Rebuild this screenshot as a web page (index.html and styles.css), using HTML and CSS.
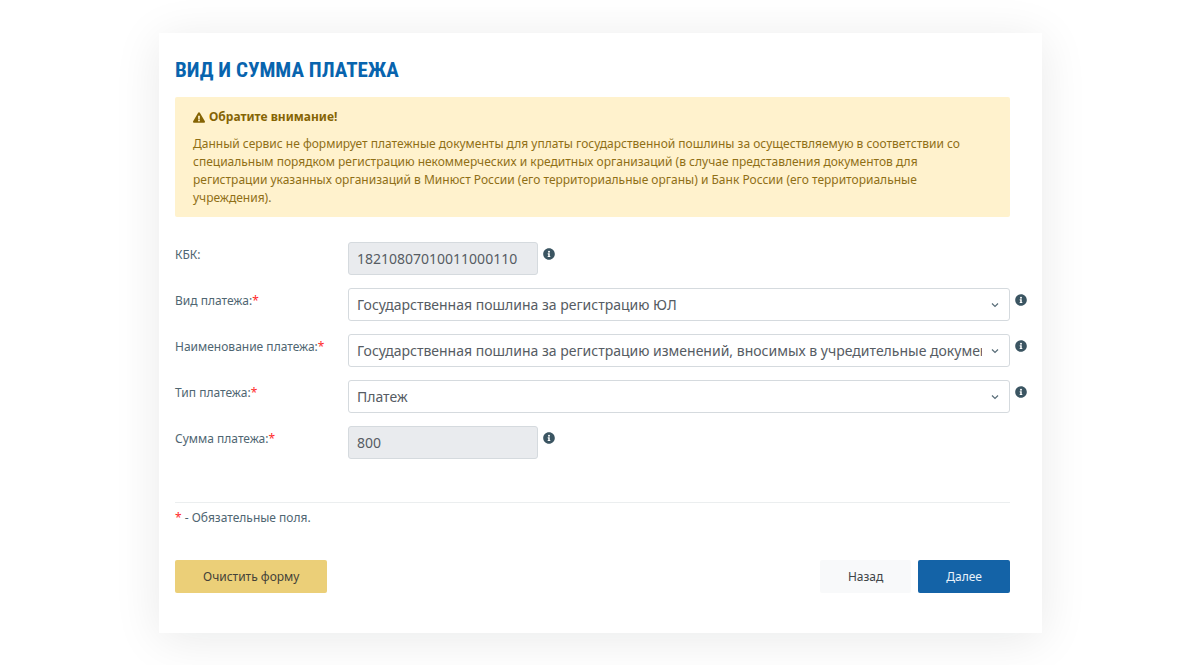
FILE: index.html
```html
<!DOCTYPE html>
<html lang="ru">
<head>
<meta charset="utf-8">
<title>Вид и сумма платежа</title>
<link rel="stylesheet" href="styles.css">
</head>
<body>
<svg class="sprite" aria-hidden="true">
  <symbol id="info" viewBox="0 0 512 512"><path fill="currentColor" d="M256 8C119 8 8 119 8 256s111 248 248 248 248-111 248-248S393 8 256 8zm0 110a42 42 0 1 1 0 84 42 42 0 0 1 0-84zm56 254c0 7-5 12-12 12h-88c-7 0-12-5-12-12v-24c0-7 5-12 12-12h12v-64h-12c-7 0-12-5-12-12v-24c0-7 5-12 12-12h64c7 0 12 5 12 12v100h12c7 0 12 5 12 12v24z"/></symbol>
</svg>
<main class="card">
  <h1 class="title">Вид и сумма платежа</h1>
  <section class="alert">
    <h2 class="alert-title">
      <svg class="alert-icon" viewBox="0 0 576 512" aria-hidden="true"><path fill="currentColor" d="M569.500 440C588 472 565 512 528 512H48c-37 0-60-40-41.500-72L246.400 24c18.500-32 64.700-32 83.200 0l239.900 416zM288 354a46 46 0 1 0 0 92 46 46 0 0 0 0-92zm-43.700-165.300 7.400 136c.400 6.400 5.600 11.300 12 11.300h48.500c6.400 0 11.700-4.900 12-11.300l7.400-136c.400-6.900-5.100-12.700-12-12.700h-63.400c-6.800 0-12.300 5.800-11.900 12.700z"/></svg>
      Обратите внимание!
    </h2>
    <p class="alert-text">Данный сервис не формирует платежные документы для уплаты государственной пошлины за осуществляемую в соответствии со специальным порядком регистрацию некоммерческих и кредитных организаций (в случае представления документов для регистрации указанных организаций в Минюст России (его территориальные органы) и Банк России (его территориальные учреждения).</p>
  </section>
  <form class="form">
    <div class="fields">
      <div class="row">
        <label class="label" for="kbk">КБК:</label>
        <div class="control">
          <input class="field field-short" id="kbk" type="text" value="18210807010011000110" readonly>
          <svg class="info"><use href="#info"/></svg>
        </div>
      </div>
      <div class="row">
        <label class="label" for="kind">Вид платежа:<span class="required">*</span></label>
        <div class="control">
          <select class="field select" id="kind"><option>Государственная пошлина за регистрацию ЮЛ</option></select>
          <svg class="info"><use href="#info"/></svg>
        </div>
      </div>
      <div class="row">
        <label class="label" for="name">Наименование платежа:<span class="required">*</span></label>
        <div class="control">
          <select class="field select" id="name"><option>Государственная пошлина за регистрацию изменений, вносимых в учредительные документы</option></select>
          <svg class="info"><use href="#info"/></svg>
        </div>
      </div>
      <div class="row">
        <label class="label" for="type">Тип платежа:<span class="required">*</span></label>
        <div class="control">
          <select class="field select" id="type"><option>Платеж</option></select>
          <svg class="info"><use href="#info"/></svg>
        </div>
      </div>
      <div class="row">
        <label class="label" for="sum">Сумма платежа:<span class="required">*</span></label>
        <div class="control">
          <input class="field field-short" id="sum" type="text" value="800" readonly>
          <svg class="info"><use href="#info"/></svg>
        </div>
      </div>
    </div>
    <p class="note"><span class="required">*</span> - Обязательные поля.</p>
    <div class="actions">
      <button class="button button-clear" type="button">Очистить форму</button>
      <button class="button button-back" type="button">Назад</button>
      <button class="button button-next" type="button">Далее</button>
    </div>
  </form>
</main>
</body>
</html>
```
FILE: styles.css
```css
* {
  box-sizing: border-box;
}

body {
  margin: 0;
  padding: 33px 158px 32px 159px;
  background: #fff;
  color: #4f6672;
  font: 12px/18px "Noto Sans", sans-serif;
}

.sprite {
  display: none;
}

.card {
  padding: 24px 32px 40px 16px;
  background: #fff;
  box-shadow: 0 6px 45px rgba(0, 20, 20, 0.09);
}

.title {
  margin: 0 0 14px;
  color: #0864ae;
  font: 700 21px/26px "Roboto Condensed", "Liberation Sans Narrow", Roboto, sans-serif;
  text-transform: uppercase;
}

.alert {
  padding: 11px 18px 10px;
  border-radius: 2px;
  background: #fff2cd;
  color: #8f6f16;
}

.alert-title {
  display: flex;
  align-items: center;
  gap: 4px;
  margin: 0 0 9px;
  color: #856404;
  font-size: 12px;
  line-height: 18px;
}

.alert-icon {
  width: 12px;
  height: 11px;
}

.alert-text {
  margin: 0;
}

.fields {
  display: grid;
  gap: 13px;
  padding: 25px 0 43px;
  border-bottom: 1px solid #ebeeef;
}

.row {
  display: grid;
  grid-template-columns: 173px minmax(0, 1fr);
}

.label {
  padding-top: 4px;
}

.required {
  color: #ff2a2a;
}

.control {
  display: flex;
  gap: 5px;
  margin-right: -17px;
}

.field {
  flex: 1;
  min-width: 0;
  height: 33px;
  padding: 0 8px;
  border: 1px solid #d5dade;
  border-radius: 3px;
  background: #fff;
  color: #565c63;
  font: 14px/20px "Noto Sans", sans-serif;
}

.field-short {
  flex: 0 0 190px;
  background: #e9ebee;
}

.select {
  appearance: none;
  padding-right: 27px;
  background: #fff url("data:image/svg+xml,%3Csvg xmlns='http://www.w3.org/2000/svg' viewBox='0 0 8 6'%3E%3Cpath d='M1 1.500 4 4.500 7 1.500' fill='none' stroke='%23586d78' stroke-width='1.200'/%3E%3C/svg%3E") no-repeat right 10px center / 8px 6px;
}

.info {
  flex: none;
  width: 12px;
  height: 12px;
  margin-top: 6px;
  color: #3b5562;
}

.note {
  margin: 6px 0 33px;
}

.actions {
  display: flex;
  gap: 7px;
}

.button {
  height: 33px;
  padding: 0 27px;
  border: 1px solid transparent;
  border-radius: 2px;
  font: 12px/18px "Noto Sans", sans-serif;
}

.button-clear {
  margin-right: auto;
  background: #ebcf78;
  color: #444238;
}

.button-back {
  background: #f8f9fa;
  color: #3f4447;
}

.button-next {
  background: #1463a7;
  color: #e8f2fa;
}
```
